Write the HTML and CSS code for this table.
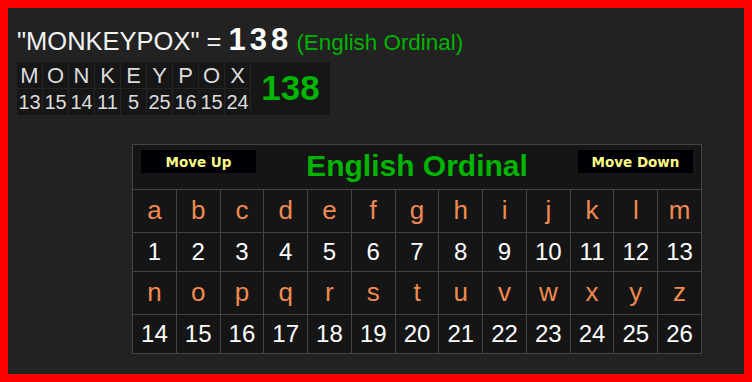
FILE: index.html
```html
<!DOCTYPE html>
<html>
<head>
<meta charset="utf-8">
<link rel="stylesheet" href="styles.css">
</head>
<body>
<div class="frame">
  <div class="result">"MONKEYPOX" = <b class="sum">138</b> <span class="cipher">(English Ordinal)</span></div>
  <div class="breakdown">
    <div class="bl">M</div><div class="bl">O</div><div class="bl">N</div><div class="bl">K</div><div class="bl">E</div><div class="bl">Y</div><div class="bl">P</div><div class="bl">O</div><div class="bl">X</div>
    <div class="total">138</div>
    <div class="bn">13</div><div class="bn">15</div><div class="bn">14</div><div class="bn">11</div><div class="bn">5</div><div class="bn">25</div><div class="bn">16</div><div class="bn">15</div><div class="bn">24</div>
  </div>
  <div class="chart">
    <div class="chart-head">
      <button class="move">Move Up</button>
      <h2 class="chart-title">English Ordinal</h2>
      <button class="move">Move Down</button>
    </div>
    <div class="lt">a</div><div class="lt">b</div><div class="lt">c</div><div class="lt">d</div><div class="lt">e</div><div class="lt">f</div><div class="lt">g</div><div class="lt">h</div><div class="lt">i</div><div class="lt">j</div><div class="lt">k</div><div class="lt">l</div><div class="lt">m</div>
    <div class="nm">1</div><div class="nm">2</div><div class="nm">3</div><div class="nm">4</div><div class="nm">5</div><div class="nm">6</div><div class="nm">7</div><div class="nm">8</div><div class="nm">9</div><div class="nm">10</div><div class="nm">11</div><div class="nm">12</div><div class="nm">13</div>
    <div class="lt">n</div><div class="lt">o</div><div class="lt">p</div><div class="lt">q</div><div class="lt">r</div><div class="lt">s</div><div class="lt">t</div><div class="lt">u</div><div class="lt">v</div><div class="lt">w</div><div class="lt">x</div><div class="lt">y</div><div class="lt">z</div>
    <div class="nm">14</div><div class="nm">15</div><div class="nm">16</div><div class="nm">17</div><div class="nm">18</div><div class="nm">19</div><div class="nm">20</div><div class="nm">21</div><div class="nm">22</div><div class="nm">23</div><div class="nm">24</div><div class="nm">25</div><div class="nm">26</div>
  </div>
</div>
</body>
</html>
```

FILE: styles.css
```css
html, body {
  margin: 0;
  padding: 0;
  height: 382px;
  overflow: hidden;
}
body {
  font-family: "Liberation Sans", Arial, sans-serif;
}
.frame {
  box-sizing: border-box;
  height: 382px;
  border: 8px solid #ff0000;
  background: #222222;
  padding: 0 9px;
  color: #ffffff;
}
.result {
  margin-top: 16px;
  height: 38px;
  font-size: 25.5px;
  line-height: 32px;
  color: #f2f2f2;
  white-space: nowrap;
}
.sum {
  font-size: 31px;
  letter-spacing: 4px;
  margin-right: -3px;
  color: #ffffff;
}
.cipher {
  font-size: 22.4px;
  color: #00b400;
}
.breakdown {
  display: grid;
  grid-template-columns: repeat(9, 25px) 79px;
  grid-template-rows: 26px 26px;
  gap: 1px;
  width: 313px;
  background: #252525;
}
.bl, .bn {
  background: #161616;
  color: #dddddd;
  display: flex;
  align-items: center;
  justify-content: center;
}
.bl {
  font-size: 22px;
  padding-top: 2px;
}
.bn {
  font-size: 20px;
}
.total {
  grid-column: 10;
  grid-row: 1 / span 2;
  background: #161616;
  color: #00b400;
  font-weight: bold;
  font-size: 35px;
  display: flex;
  align-items: center;
  justify-content: center;
  padding-bottom: 2px;
}
.chart {
  margin: 29px 0 0 115px;
  width: 569px;
  display: grid;
  grid-template-columns: repeat(13, 1fr);
  grid-template-rows: 45px 43px 39px 43px 39px;
  border-top: 1px solid #444444;
  border-left: 1px solid #444444;
  background: #151515;
}
.chart > div {
  border-right: 1px solid #444444;
  border-bottom: 1px solid #444444;
  display: flex;
  align-items: center;
  justify-content: center;
}
.chart > .chart-head {
  grid-column: 1 / -1;
  display: flex;
  justify-content: space-between;
  align-items: flex-start;
  padding: 5px 8px 0;
}
.move {
  width: 115px;
  height: 23px;
  background: #000004;
  border: none;
  padding: 0;
  color: #ffff88;
  font-family: "DejaVu Sans", Verdana, sans-serif;
  font-weight: bold;
  font-size: 13.5px;
}
.chart-title {
  margin: -1px 0 0;
  font-size: 30px;
  line-height: 34px;
  font-weight: bold;
  color: #00b400;
}
.lt {
  color: #f08a4e;
  font-size: 26px;
  padding-bottom: 2px;
}
.nm {
  color: #ffffff;
  font-size: 24px;
}
```
